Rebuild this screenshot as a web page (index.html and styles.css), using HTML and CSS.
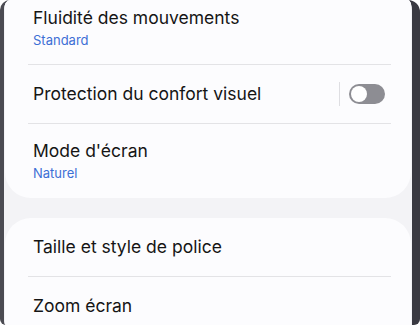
FILE: index.html
```html
<!DOCTYPE html>
<html lang="fr">
<head>
<meta charset="utf-8">
<link rel="stylesheet" href="styles.css">
</head>
<body>
<div class="device">
  <div class="screen">
    <section class="card card-top">
      <div class="row row-sub row-first">
        <div class="title">Fluidité des mouvements</div>
        <div class="sub">Standard</div>
      </div>
      <div class="divider"></div>
      <div class="row row-single row-toggle">
        <div class="title">Protection du confort visuel</div>
        <div class="toggle-wrap">
          <span class="vsep"></span>
          <span class="toggle"><span class="knob"></span></span>
        </div>
      </div>
      <div class="divider"></div>
      <div class="row row-sub">
        <div class="title">Mode d'écran</div>
        <div class="sub">Naturel</div>
      </div>
    </section>
    <section class="card card-bottom">
      <div class="row row-single">
        <div class="title">Taille et style de police</div>
      </div>
      <div class="divider"></div>
      <div class="row row-single">
        <div class="title">Zoom écran</div>
      </div>
    </section>
  </div>
</div>
</body>
</html>
```
FILE: styles.css
```css
html, body {
  margin: 0;
  padding: 0;
  background: #ffffff;
}
body {
  width: 420px;
  height: 325px;
  overflow: hidden;
  font-family: Inter, Roboto, "Noto Sans", sans-serif;
}
.device {
  width: 420px;
  height: 325px;
  box-sizing: border-box;
  border-left: 4px solid #4b4b52;
  border-right: 8px solid #3a3a42;
  background: #f3f3f6;
  border-radius: 10px 12px 6px 6px;
  overflow: hidden;
}
.screen {
  height: 100%;
  padding: 0 1px;
  display: flex;
  flex-direction: column;
  gap: 20px;
  background: #f3f3f6;
}
.card {
  background: #fcfcfe;
  border-radius: 26px;
  padding: 0 20px 0 23px;
}
.card-top {
  border-radius: 0 0 26px 26px;
  flex: none;
}
.card-bottom {
  flex: 1;
  border-radius: 26px 26px 0 0;
}
.row {
  display: flex;
  flex-direction: column;
  justify-content: center;
  padding-left: 5px;
  box-sizing: border-box;
}
.row-sub {
  padding-top: 16px;
  padding-bottom: 16px;
}
.row-first {
  padding-top: 7px;
  padding-bottom: 15px;
}
.row-single {
  height: 58px;
}
.row-toggle {
  flex-direction: row;
  align-items: center;
  justify-content: space-between;
}
.title {
  font-size: 17.5px;
  color: #151515;
  line-height: 22px;
  letter-spacing: 0;
}
.sub {
  font-size: 13px;
  color: #3c6fd5;
  line-height: 18px;
  margin-top: 2px;
}
.divider {
  height: 1px;
  background: #e3e3e6;
}
.toggle-wrap {
  display: flex;
  align-items: center;
  gap: 9px;
  margin-right: 6px;
}
.vsep {
  width: 1px;
  height: 24px;
  background: #dedee2;
}
.toggle {
  width: 36px;
  height: 20px;
  border-radius: 10px;
  background: #8d8d93;
  display: flex;
  align-items: center;
  padding-left: 2px;
  box-sizing: border-box;
}
.knob {
  width: 16px;
  height: 16px;
  border-radius: 50%;
  background: #ffffff;
}
```
